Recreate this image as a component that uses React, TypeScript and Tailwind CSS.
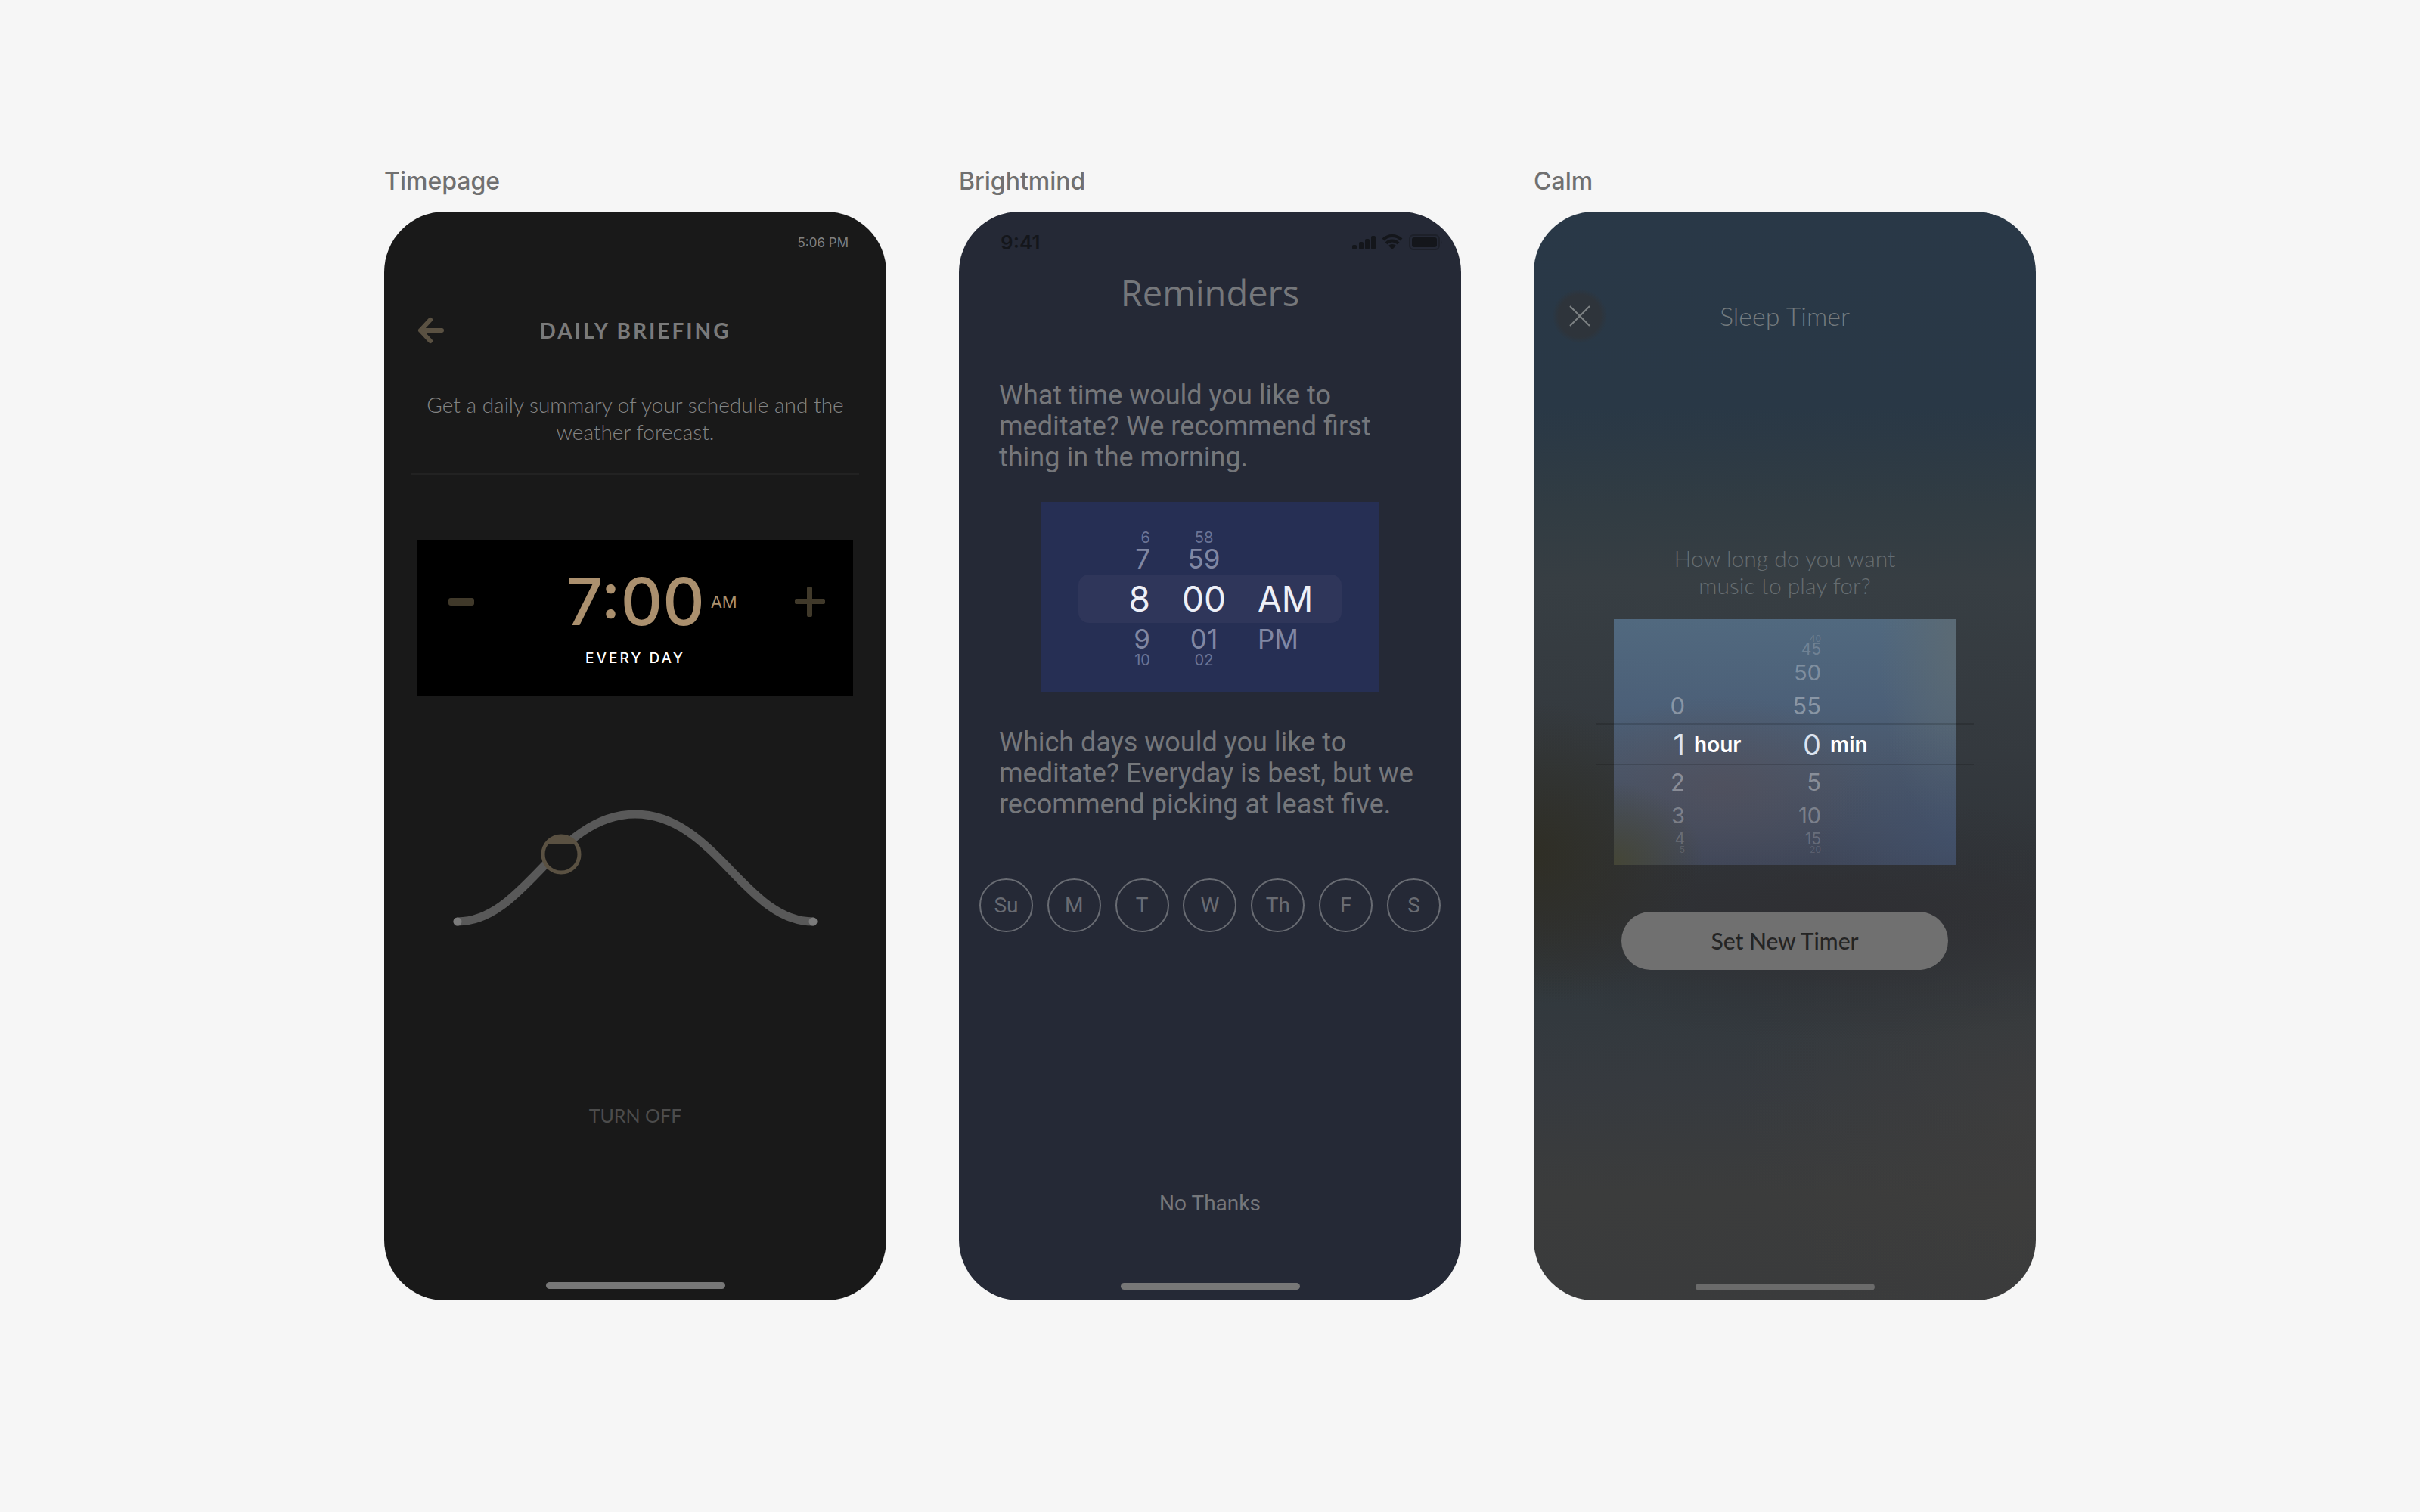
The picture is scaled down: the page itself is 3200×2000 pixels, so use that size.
import { useState } from "react";
import type { ReactNode } from "react";

// Shared phone frame with the app name above it
function Phone({
  name,
  className,
  children,
}: {
  name: string;
  className: string;
  children: ReactNode;
}) {
  return (
    <section>
      <h2 className="mb-[20px] font-['Inter',sans-serif] text-[32px] leading-[40px] font-medium text-[#707070]">
        {name}
      </h2>
      <div
        className={`flex min-h-[1440px] flex-col overflow-hidden rounded-[80px] ${className}`}
      >
        {children}
      </div>
    </section>
  );
}

function HomeIndicator({ className }: { className: string }) {
  return (
    <div className={`mx-auto mt-auto h-[9px] w-[237px] rounded-full ${className}`} />
  );
}

function Timepage() {
  const [hour, setHour] = useState(7);

  return (
    <Phone name="Timepage" className="bg-[#191919] pb-[15px]">
      <div className="mt-[29px] pr-[50px] text-right font-['Inter',sans-serif] text-[17px] leading-[24px] text-[#808080]">
        5:06 PM
      </div>

      <header className="mt-[86px] grid grid-cols-[40px_1fr_40px] items-center px-11">
        <button type="button" aria-label="Back" className="text-[#5a5142]">
          <svg width="36" height="36" viewBox="0 0 36 36" fill="none">
            <path
              d="M32 18H4M17 4L4 18l13 14"
              stroke="currentColor"
              strokeWidth="6"
              strokeLinecap="round"
              strokeLinejoin="round"
            />
          </svg>
        </button>
        <h3 className="text-center font-['Lato',sans-serif] text-[28px] leading-[36px] font-bold tracking-[3px] text-[#7a7a7a]">
          DAILY BRIEFING
        </h3>
      </header>

      <p className="mt-[62px] px-10 text-center font-['Lato',sans-serif] text-[28px] leading-[36px] font-light text-[#848484]">
        Get a daily summary of your schedule and the weather forecast.
      </p>

      <hr className="mx-9 mt-[37px] h-[2px] border-0 bg-[#222222]" />

      {/* Time stepper */}
      <div className="mx-11 mt-[86px] h-[206px] bg-black pt-[34px]">
        <div className="grid h-[96px] grid-cols-[1fr_auto_1fr] items-center font-['Inter',sans-serif] text-[#ab906e]">
          <button
            type="button"
            aria-label="Earlier"
            className="ml-[41px] w-fit text-[#40392a]"
            onClick={() => setHour((h) => Math.max(1, h - 1))}
          >
            <svg width="34" height="40" viewBox="0 0 34 40">
              <rect y="15" width="34" height="10" rx="3" fill="currentColor" />
            </svg>
          </button>
          <span className="text-[86px] leading-[96px] font-medium">{hour}:00</span>
          <div className="flex items-center justify-between pr-[37px] pl-2">
            <span className="text-[22px] leading-[32px]">AM</span>
            <button
              type="button"
              aria-label="Later"
              className="text-[#40392a]"
              onClick={() => setHour((h) => Math.min(12, h + 1))}
            >
              <svg width="40" height="40" viewBox="0 0 40 40" fill="currentColor">
                <rect y="16" width="40" height="7" rx="2" />
                <rect x="16" width="7" height="40" rx="2" />
              </svg>
            </button>
          </div>
        </div>
        <p className="mt-[15px] text-center font-['Inter',sans-serif] text-[19px] leading-[24px] font-medium tracking-[3px] text-white">
          EVERY DAY
        </p>
      </div>

      {/* Sun curve */}
      <svg
        className="mx-auto mt-[140px]"
        width="500"
        height="180"
        viewBox="0 0 500 180"
        fill="none"
        role="img"
        aria-label="Sun position"
      >
        <path
          d="M15 159C105 159 145 17 250 17S395 159 485 159"
          stroke="#595959"
          strokeWidth="11"
          strokeLinecap="round"
        />
        <circle cx="15" cy="159" r="5.5" fill="#7b7b7b" />
        <circle cx="485" cy="159" r="5.5" fill="#7b7b7b" />
        <circle cx="152" cy="70" r="24" fill="#191919" stroke="#5a5142" strokeWidth="5" />
        <path d="M131 57a25 25 0 0 1 42 0z" fill="#5a5142" />
      </svg>

      <button
        type="button"
        className="mx-auto mt-[217px] font-['Lato',sans-serif] text-[25px] leading-[36px] text-[#4c4c4c]"
      >
        TURN OFF
      </button>

      <HomeIndicator className="bg-[#777777]" />
    </Phone>
  );
}

function StatusIcons() {
  return (
    <svg width="120" height="24" viewBox="0 0 120 24" className="text-[#14161b]" aria-hidden="true">
      <g fill="currentColor">
        <rect x="0" y="15" width="6" height="6" rx="2" />
        <rect x="9" y="11" width="6" height="10" rx="2" />
        <rect x="17" y="7" width="6" height="14" rx="2" />
        <rect x="25" y="3" width="6" height="18" rx="2" />
        <path d="M53 21l-5-5a7 7 0 0 1 10 0z" />
        <rect x="79" y="5" width="33" height="13" rx="3" />
      </g>
      <path
        d="M41 8a17 17 0 0 1 24 0M45 13a11 11 0 0 1 16 0"
        fill="none"
        stroke="currentColor"
        strokeWidth="4"
      />
      <rect x="76" y="2" width="39" height="19" rx="5" fill="none" stroke="#1d2029" strokeWidth="2" />
      <path d="M117 8q3 4 0 7z" fill="#1d2029" />
    </svg>
  );
}

// [hour, minute, period] plus the look of each row as it turns away
const TIME_ROWS = [
  { cells: ["6", "58", ""], look: "h-[14px] text-[20px] leading-[14px] text-[#6b7496]" },
  { cells: ["7", "59", ""], look: "h-[42px] text-[35px] leading-[42px] text-[#8087a3]" },
  {
    cells: ["8", "00", "AM"],
    look: "h-[64px] rounded-[14px] bg-[#2f365a] text-[46px] leading-[64px] text-[#edf0f8]",
  },
  { cells: ["9", "01", "PM"], look: "h-[42px] text-[35px] leading-[42px] text-[#8087a3]" },
  { cells: ["10", "02", ""], look: "h-[14px] text-[20px] leading-[14px] text-[#6b7496]" },
];

const DAYS = ["Su", "M", "T", "W", "Th", "F", "S"];

function Brightmind() {
  return (
    <Phone name="Brightmind" className="bg-[#252936] pb-[14px] font-['Roboto',sans-serif] text-[#75777b]">
      <div className="mt-[29px] flex items-center justify-between pr-6 pl-[55px]">
        <span className="font-['Inter',sans-serif] text-[26px] leading-[24px] font-semibold text-[#14161b]">
          9:41
        </span>
        <StatusIcons />
      </div>

      <h3 className="mt-[22px] text-center font-['Open_Sans',sans-serif] text-[47px] leading-[64px] font-medium">
        Reminders
      </h3>

      <p className="mt-[84px] px-[53px] text-[36px] leading-[41px]">
        What time would you like to meditate? We recommend first thing in the morning.
      </p>

      {/* Time wheel */}
      <div className="mx-[108px] mt-[38px] h-[252px] bg-[#262f54] px-[50px] pt-[40px] font-['Inter',sans-serif]">
        {TIME_ROWS.map(({ cells, look }) => (
          <div key={cells[0]} className={`grid grid-cols-[95px_142px_1fr] ${look}`}>
            <span className="text-right">{cells[0]}</span>
            <span className="text-center">{cells[1]}</span>
            <span>{cells[2]}</span>
          </div>
        ))}
      </div>

      <p className="mt-[46px] px-[53px] text-[36px] leading-[41px]">
        Which days would you like to meditate? Everyday is best, but we recommend picking at least
        five.
      </p>

      <div className="mt-[77px] flex justify-between px-[27px]">
        {DAYS.map((day) => (
          <button
            key={day}
            type="button"
            className="size-[71px] rounded-full border-2 border-[#696c73] text-[28px] text-[#696c73]"
          >
            {day}
          </button>
        ))}
      </div>

      <button type="button" className="mx-auto mt-[341px] text-[28px] leading-[36px]">
        No Thanks
      </button>

      <HomeIndicator className="bg-[#777777]" />
    </Phone>
  );
}

const TIMER_ROWS = [
  { hour: "", min: "40", look: "h-[8px] text-[12px] leading-[8px] text-white/15" },
  { hour: "", min: "45", look: "h-[20px] text-[21px] leading-[20px] text-white/20" },
  { hour: "", min: "50", look: "h-[42px] text-[29px] leading-[42px] text-white/30" },
  { hour: "0", min: "55", look: "h-[46px] text-[31px] leading-[46px] text-white/35" },
  {
    hour: "1",
    min: "0",
    selected: true,
    look: "-mx-6 h-[55px] border-y-2 border-black/15 px-6 text-[38px] leading-[53px] text-[#dbe3ee]",
  },
  { hour: "2", min: "5", look: "h-[46px] text-[31px] leading-[46px] text-white/35" },
  { hour: "3", min: "10", look: "h-[42px] text-[29px] leading-[42px] text-white/30" },
  { hour: "4", min: "15", look: "h-[20px] text-[21px] leading-[20px] text-white/20" },
  { hour: "5", min: "20", look: "h-[8px] text-[12px] leading-[8px] text-white/15" },
];

function Calm() {
  return (
    <Phone
      name="Calm"
      className="bg-[radial-gradient(ellipse_220px_200px_at_0%_59%,#2f2e25,transparent),radial-gradient(ellipse_500px_160px_at_60%_65%,#2f2f33,transparent),radial-gradient(ellipse_400px_340px_at_100%_82%,#403e3c99,transparent),linear-gradient(#293847_0%,#293846_18%,#313c43_27%,#373e43_34%,#34393e_50%,#2f3337_64%,#32393e_72%,#363a3f_80%,#3b3c3c_90%,#3a3b3c_100%)] pb-[13px] font-['Lato',sans-serif]"
    >
      <header className="mt-[102px] grid grid-cols-[72px_1fr_72px] items-center px-[25px]">
        <button
          type="button"
          aria-label="Close"
          className="flex size-[72px] items-center justify-center rounded-full bg-[radial-gradient(circle,#2e343b_55%,transparent_71%)]"
        >
          <svg width="28" height="28" viewBox="0 0 28 28" fill="none">
            <path d="M1 1l26 26M27 1L1 27" stroke="#7d8284" strokeWidth="2" />
          </svg>
        </button>
        <h3 className="text-center text-[34px] leading-[40px] font-light text-[#737a7e]">
          Sleep Timer
        </h3>
      </header>

      <p className="mt-[266px] text-center text-[30px] leading-[36px] font-light text-[#666d71]">
        How long do you want
        <br />
        music to play for?
      </p>

      {/* Duration wheel */}
      <div className="mx-[106px] mt-[27px] h-[325px] bg-[radial-gradient(ellipse_120px_110px_at_0%_100%,#454636,transparent),radial-gradient(ellipse_180px_150px_at_100%_88%,#42547199,transparent),radial-gradient(ellipse_200px_120px_at_32%_68%,#544f5999,transparent),radial-gradient(ellipse_100px_260px_at_100%_10%,#5b6a74,transparent),linear-gradient(#51697f,#4c6078_35%,#4a576a_60%,#3f4658)] pt-[22px] font-['Inter',sans-serif]">
        {TIMER_ROWS.map(({ hour, min, selected, look }) => (
          <div key={min} className={`grid grid-cols-[94px_81px_99px_1fr] ${look}`}>
            <span className="text-right">{hour}</span>
            <span className="pl-3 text-[28px] font-semibold text-white">{selected && "hour"}</span>
            <span className="text-right">{min}</span>
            <span className="pl-3 text-[28px] font-semibold text-white">{selected && "min"}</span>
          </div>
        ))}
      </div>

      <button
        type="button"
        className="mx-[116px] mt-[62px] h-[77px] rounded-full bg-[#707070] text-[30px] font-medium text-[#242424]"
      >
        Set New Timer
      </button>

      <HomeIndicator className="bg-[#6b6b6b]" />
    </Phone>
  );
}

export default function App() {
  return (
    <main className="min-h-screen bg-[#f6f6f6] pt-[220px] pb-24">
      <div className="mx-auto grid max-w-[2184px] grid-cols-3 gap-24">
        <Timepage />
        <Brightmind />
        <Calm />
      </div>
    </main>
  );
}
